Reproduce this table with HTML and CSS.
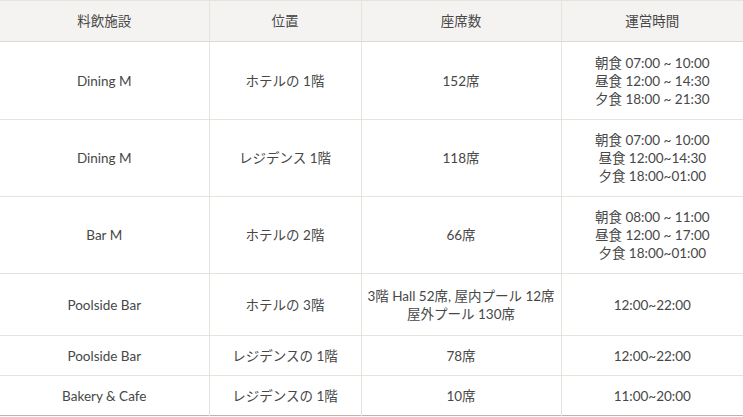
FILE: index.html
```html
<!DOCTYPE html>
<html lang="ja">
<head>
<meta charset="utf-8">
<link rel="stylesheet" href="styles.css">
</head>
<body>
<table class="dining">
  <colgroup>
    <col class="c1"><col class="c2"><col class="c3"><col class="c4">
  </colgroup>
  <thead>
    <tr class="h-head"><th>料飲施設</th><th>位置</th><th>座席数</th><th>運営時間</th></tr>
  </thead>
  <tbody>
    <tr class="h-3a"><td>Dining M</td><td>ホテルの 1階</td><td>152席</td><td>朝食 07:00 ~ 10:00<br>昼食 12:00 ~ 14:30<br>夕食 18:00 ~ 21:30</td></tr>
    <tr class="h-3b"><td>Dining M</td><td>レジデンス 1階</td><td>118席</td><td>朝食 07:00 ~ 10:00<br>昼食 12:00~14:30<br>夕食 18:00~01:00</td></tr>
    <tr class="h-3b"><td>Bar M</td><td>ホテルの 2階</td><td>66席</td><td>朝食 08:00 ~ 11:00<br>昼食 12:00 ~ 17:00<br>夕食 18:00~01:00</td></tr>
    <tr class="h-2"><td>Poolside Bar</td><td>ホテルの 3階</td><td>3階 Hall 52席, 屋内プール 12席<br>屋外プール 130席</td><td>12:00~22:00</td></tr>
    <tr class="h-1"><td>Poolside Bar</td><td>レジデンスの 1階</td><td>78席</td><td>12:00~22:00</td></tr>
    <tr class="h-1"><td>Bakery &amp; Cafe</td><td>レジデンスの 1階</td><td>10席</td><td>11:00~20:00</td></tr>
  </tbody>
</table>
</body>
</html>
```

FILE: styles.css
```css
html, body {
  margin: 0;
  padding: 0;
  background: #fff;
}
.dining {
  width: 743px;
  border-collapse: collapse;
  table-layout: fixed;
  font-family: "Lato", "Noto Sans CJK JP", sans-serif;
  font-size: 13.5px;
  line-height: 18px;
  color: #474747;
  border-top: 1px solid #b9b6b1;
  border-bottom: 1px solid #b9b6b1;
}
.c1 { width: 209px; }
.c2 { width: 152px; }
.c3 { width: 200px; }
.c4 { width: 182px; }
.dining th, .dining td {
  padding: 0 4px;
  text-align: center;
  vertical-align: middle;
  border-left: 1px solid #e6e2dc;
  border-top: 1px solid #e6e2dc;
  font-weight: normal;
}
.dining th:first-child, .dining td:first-child {
  border-left: none;
}
.dining thead th {
  background: #f4f3f1;
  border-bottom: 1px solid #dcd8d2;
}
.h-head { height: 41px; }
.h-3a { height: 78px; }
.h-3b { height: 77px; }
.h-2 { height: 62px; }
.h-1 { height: 40px; }
```
